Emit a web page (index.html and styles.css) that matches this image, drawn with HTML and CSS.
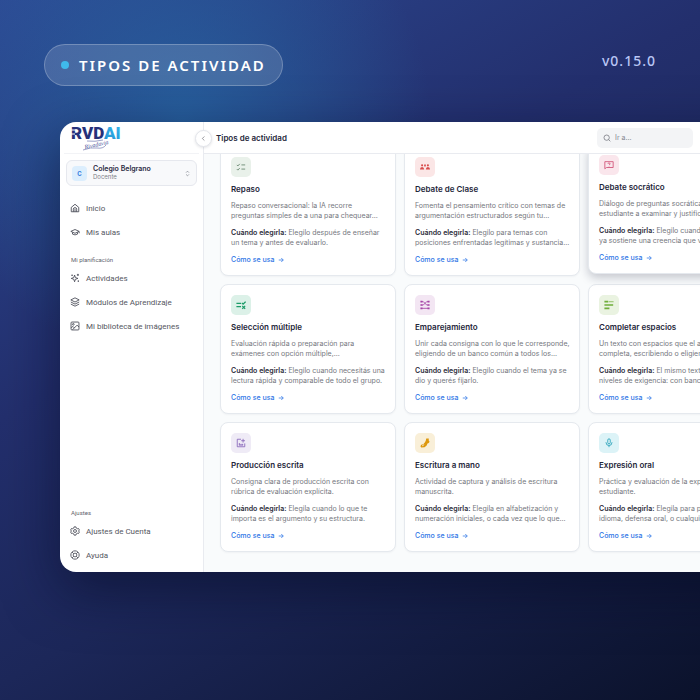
FILE: index.html
```html
<!DOCTYPE html>
<html lang="es">
<head>
    <meta charset="UTF-8">
    <meta name="viewport" content="width=device-width, initial-scale=1.0">
    <title>Tipos de actividad</title>
    <link rel="stylesheet" href="styles.css">
</head>
<body>
    <header class="hero">
        <h1 class="pill"><span class="pill-dot"></span>TIPOS DE ACTIVIDAD</h1>
        <span class="version">v0.15.0</span>
    </header>

    <div class="window">
        <aside class="sidebar">
            <div class="brand">
                <svg width="56" height="28" viewBox="0 0 56 28" role="img" aria-label="RVD AI">
                    <defs>
                        <linearGradient id="ai" x1="0" y1="1" x2="1" y2="0">
                            <stop offset="0" stop-color="#1b7fc4"/>
                            <stop offset="1" stop-color="#35b8ee"/>
                        </linearGradient>
                    </defs>
                    <text class="logo-text" x="0" y="14" fill="#26317a">RVD<tspan fill="url(#ai)">AI</tspan></text>
                    <path d="M0 5h6M0 9h4" stroke="#fff" stroke-width="1"/>
                    <text class="logo-script" x="14" y="24" transform="rotate(-12 14 24)">Rivadavia</text>
                    <path d="M12 25q8-3 14-2t9-3M16 16q8 1 16-1" fill="none" stroke="#5a63a3" stroke-width=".6"/>
                </svg>
            </div>

            <button class="school" type="button">
                <span class="school-avatar">C</span>
                <span class="school-info">
                    <strong>Colegio Belgrano</strong>
                    <small>Docente</small>
                </span>
                <svg class="school-arrows" viewBox="0 0 24 24"><path d="m7 15 5 5 5-5M7 9l5-5 5 5"/></svg>
            </button>

            <nav class="menu">
                <a href="#"><svg viewBox="0 0 24 24"><path d="M3 10.500 12 3l9 7.500V21H3z"/><path d="M8 21v-6a4 4 0 0 1 8 0v6M12 14v7"/></svg>Inicio</a>
                <a href="#"><svg viewBox="0 0 24 24"><path d="M2 10.500 12 6l10 4.500L12 15zM6 13v4q6 4 12 0v-4M22 11v4"/></svg>Mis aulas</a>
            </nav>

            <h2 class="menu-label">Mi planificación</h2>
            <nav class="menu">
                <a href="#"><svg viewBox="0 0 24 24"><path d="M11 5l2 6 6 2-6 2-2 6-2-6-6-2 6-2zM19 2v5M16.500 4.500h5M5 4v3M3.500 5.500h3M20 18v3M18.500 19.500h3"/></svg>Actividades</a>
                <a href="#"><svg viewBox="0 0 24 24"><path d="m12 2 10 5-10 5L2 7zM2 12l10 5 10-5M2 17l10 5 10-5"/></svg>Módulos de Aprendizaje</a>
                <a href="#"><svg viewBox="0 0 24 24"><rect x="2.500" y="2.500" width="19" height="19" rx="2"/><circle cx="8" cy="8" r="2"/><path d="m6 21 11-11 4.500 4.500M3 16l4-3 4 4"/></svg>Mi biblioteca de imágenes</a>
            </nav>

            <h2 class="menu-label menu-label-bottom">Ajustes</h2>
            <nav class="menu">
                <a href="#"><svg viewBox="0 0 24 24"><path d="M10 2h4l1 3 2.500 1.500 3-.5 2 3.500-2 2.500 2 2.500-2 3.500-3-.5L15 19l-1 3h-4l-1-3-2.500-1.500-3 .5-2-3.500 2-2.500-2-2.500 2-3.500 3 .5L9 5z"/><circle cx="12" cy="12" r="3.500"/></svg>Ajustes de Cuenta</a>
                <a href="#"><svg viewBox="0 0 24 24"><circle cx="12" cy="12" r="10"/><rect x="8" y="8" width="8" height="8" rx="2"/><path d="m5 5 3.500 3.500M19 5l-3.500 3.500M5 19l3.500-3.500M19 19l-3.500-3.500"/></svg>Ayuda</a>
            </nav>
        </aside>

        <main class="main">
            <div class="topbar">
                <button class="collapse" type="button" aria-label="Contraer menú"><svg viewBox="0 0 24 24"><path d="m15 5-7 7 7 7"/></svg></button>
                <h2>Tipos de actividad</h2>
                <label class="search">
                    <svg viewBox="0 0 24 24"><circle cx="11" cy="11" r="8"/><path d="m17 17 5 5"/></svg>
                    <input type="text" placeholder="Ir a..." aria-label="Ir a">
                </label>
            </div>

            <div class="content">
                <div class="grid">
                    <article class="card">
                        <span class="icon sage"><svg viewBox="0 0 24 24"><path d="m2 7 2.500 2.500L9 4.500M2 17l2.500 2.500L9 14.500M13 7h9M13 17h9"/></svg></span>
                        <h3>Repaso</h3>
                        <p>Repaso conversacional: la IA recorre<br>preguntas simples de a una para chequear...</p>
                        <p><strong>Cuándo elegirla:</strong> Elegilo después de enseñar<br>un tema y antes de evaluarlo.</p>
                        <a href="#">Cómo se usa <svg viewBox="0 0 24 24"><path d="M3 12h18M13 4l8 8-8 8"/></svg></a>
                    </article>

                    <article class="card">
                        <span class="icon red"><svg viewBox="0 0 24 24"><g fill="currentColor" stroke="none"><circle cx="5" cy="8" r="2.500"/><path d="M0 18q0-6 5-6t5 6z"/><circle cx="19" cy="8" r="2.500"/><path d="M14 18q0-6 5-6t5 6z"/><path d="M10 6h4v4h-1l-1 2-1-2h-1z"/></g></svg></span>
                        <h3>Debate de Clase</h3>
                        <p>Fomenta el pensamiento crítico con temas de<br>argumentación estructurados según tu...</p>
                        <p><strong>Cuándo elegirla:</strong> Elegilo para temas con<br>posiciones enfrentadas legítimas y sustancia...</p>
                        <a href="#">Cómo se usa <svg viewBox="0 0 24 24"><path d="M3 12h18M13 4l8 8-8 8"/></svg></a>
                    </article>

                    <article class="card card-active">
                        <span class="icon rose"><svg viewBox="0 0 24 24"><path d="M2 21V4h20v14H6z"/><path d="M9.500 9q0-2 2.500-2t2.500 2-2.500 3M12 14.500v1"/></svg></span>
                        <h3>Debate socrático</h3>
                        <p>Diálogo de preguntas socráticas que lleva al<br>estudiante a examinar y justificar sus ideas.</p>
                        <p><strong>Cuándo elegirla:</strong> Elegilo cuando el curso<br>ya sostiene una creencia que vale examinar.</p>
                        <a href="#">Cómo se usa <svg viewBox="0 0 24 24"><path d="M3 12h18M13 4l8 8-8 8"/></svg></a>
                    </article>

                    <article class="card">
                        <span class="icon green"><svg viewBox="0 0 24 24"><path d="M1 8h11M1 16h11M14 7l3 3 6-6M15 14l7 7M22 14l-7 7" stroke-width="3"/></svg></span>
                        <h3>Selección múltiple</h3>
                        <p>Evaluación rápida o preparación para<br>exámenes con opción múltiple,...</p>
                        <p><strong>Cuándo elegirla:</strong> Elegilo cuando necesitás una<br>lectura rápida y comparable de todo el grupo.</p>
                        <a href="#">Cómo se usa <svg viewBox="0 0 24 24"><path d="M3 12h18M13 4l8 8-8 8"/></svg></a>
                    </article>

                    <article class="card">
                        <span class="icon purple"><svg viewBox="0 0 24 24"><path d="M4 4h4l8 8h4M4 12h4l8-8h4M4 20h16"/><path d="M1 4h5M18 4h5M1 12h5M18 12h5M1 20h5M18 20h5" stroke-width="4"/></svg></span>
                        <h3>Emparejamiento</h3>
                        <p>Unir cada consigna con lo que le corresponde,<br>eligiendo de un banco común a todos los...</p>
                        <p><strong>Cuándo elegirla:</strong> Elegilo cuando el tema ya se<br>dio y querés fijarlo.</p>
                        <a href="#">Cómo se usa <svg viewBox="0 0 24 24"><path d="M3 12h18M13 4l8 8-8 8"/></svg></a>
                    </article>

                    <article class="card">
                        <span class="icon lime"><svg viewBox="0 0 24 24"><path d="M1 12h21M1 20h12M1 4h9" stroke-width="4"/><path d="M11 4h12" stroke-width="3" opacity=".6"/></svg></span>
                        <h3>Completar espacios</h3>
                        <p>Un texto con espacios que el alumno<br>completa, escribiendo o eligiendo.</p>
                        <p><strong>Cuándo elegirla:</strong> El mismo texto sirve a<br>niveles de exigencia: con banco o sin él.</p>
                        <a href="#">Cómo se usa <svg viewBox="0 0 24 24"><path d="M3 12h18M13 4l8 8-8 8"/></svg></a>
                    </article>

                    <article class="card">
                        <span class="icon violet"><svg viewBox="0 0 24 24"><path d="M12 3H3v18h18v-8M8 17v-5M12 17v-3M16 17v-3M7 17h10M17 2v9M12.500 6.500h9"/></svg></span>
                        <h3>Producción escrita</h3>
                        <p>Consigna clara de producción escrita con<br>rúbrica de evaluación explícita.</p>
                        <p><strong>Cuándo elegirla:</strong> Elegila cuando lo que te<br>importa es el argumento y su estructura.</p>
                        <a href="#">Cómo se usa <svg viewBox="0 0 24 24"><path d="M3 12h18M13 4l8 8-8 8"/></svg></a>
                    </article>

                    <article class="card">
                        <span class="icon amber"><svg viewBox="0 0 24 24"><path fill="currentColor" stroke="none" d="M15 1h6v5l2 3-2 3-3 1-2 5-5 4-8 1-2-3 2-4 5-1 4-5 2-4z"/><path d="M5 19l5-3" stroke="#f9efd8"/></svg></span>
                        <h3>Escritura a mano</h3>
                        <p>Actividad de captura y análisis de escritura<br>manuscrita.</p>
                        <p><strong>Cuándo elegirla:</strong> Elegila en alfabetización y<br>numeración iniciales, o cada vez que lo que...</p>
                        <a href="#">Cómo se usa <svg viewBox="0 0 24 24"><path d="M3 12h18M13 4l8 8-8 8"/></svg></a>
                    </article>

                    <article class="card">
                        <span class="icon cyan"><svg viewBox="0 0 24 24"><rect x="9" y="2" width="6" height="12" rx="3"/><path d="M5 10v1a7 7 0 0 0 14 0v-1M12 18v4"/></svg></span>
                        <h3>Expresión oral</h3>
                        <p>Práctica y evaluación de la expresión del<br>estudiante.</p>
                        <p><strong>Cuándo elegirla:</strong> Elegila para practicar<br>idioma, defensa oral, o cualquier exposición.</p>
                        <a href="#">Cómo se usa <svg viewBox="0 0 24 24"><path d="M3 12h18M13 4l8 8-8 8"/></svg></a>
                    </article>
                </div>
            </div>
        </main>
    </div>
</body>
</html>
```
FILE: styles.css
```css
* {
    box-sizing: border-box;
}

body {
    min-height: 100vh;
    margin: 0;
    overflow: hidden;
    font-family: Inter, "Liberation Sans", sans-serif;
    background:
        radial-gradient(circle at 26% 17%, rgba(38, 105, 165, 0.75), rgba(38, 105, 165, 0) 32%),
        linear-gradient(150deg, #2d4a94 0%, #232f6d 38%, #1c2759 62%, #0b122b 100%);
}

h1, h2, h3, p {
    margin: 0;
}

a {
    text-decoration: none;
}

button, input {
    font-family: inherit;
}

svg {
    flex: none;
    fill: none;
    stroke: currentColor;
    stroke-width: 2;
}

.hero {
    display: flex;
    justify-content: space-between;
    padding: 44px 44px 36px;
    font-family: "Noto Sans", "Open Sans", sans-serif;
}

.pill {
    display: flex;
    align-items: center;
    gap: 10px;
    height: 42px;
    padding: 0 16px;
    border: 1px solid rgba(255, 255, 255, 0.24);
    border-radius: 21px;
    background: rgba(255, 255, 255, 0.14);
    color: #fff;
    font-size: 15px;
    font-weight: 600;
    letter-spacing: 2px;
}

.pill-dot {
    width: 8px;
    height: 8px;
    border-radius: 50%;
    background: #3fb9ec;
}

.version {
    padding-top: 8px;
    color: #b9c6f5;
    font-size: 14px;
    line-height: 18px;
    font-weight: 500;
    letter-spacing: 1px;
}

/* the window runs off the right edge */
.window {
    display: flex;
    margin: 0 -80px 0 60px;
    border-radius: 16px;
    overflow: hidden;
    background: #fff;
    box-shadow: 0 18px 54px rgba(5, 10, 35, 0.55);
}

.sidebar {
    display: flex;
    flex-direction: column;
    flex: none;
    width: 144px;
    padding-bottom: 5px;
    border-right: 1px solid #e9ebf0;
}

.brand {
    height: 32px;
    margin: 0 4px;
    padding: 3px 7px 0;
    border-bottom: 1px solid #f2f3f6;
}

.brand svg {
    display: block;
    stroke: none;
}

.logo-text {
    font-family: Roboto, Inter, sans-serif;
    font-size: 17px;
    font-weight: 900;
}

.logo-script {
    fill: #4b559c;
    font-family: "Liberation Serif", serif;
    font-size: 6px;
    font-style: italic;
}

.school {
    display: flex;
    align-items: center;
    gap: 6px;
    height: 26px;
    margin: 6px 6px 10px;
    padding: 0 5px;
    border: 1px solid #e6e8ee;
    border-radius: 6px;
    background: #f8f9fb;
    text-align: left;
}

.school-avatar {
    width: 15px;
    height: 15px;
    border-radius: 4px;
    background: #dceefd;
    color: #2f7be0;
    font-size: 6px;
    line-height: 15px;
    font-weight: 700;
    text-align: center;
}

.school-info {
    flex: 1;
}

.school-info strong,
.school-info small {
    display: block;
    line-height: 8px;
}

.school-info strong {
    color: #2b2c44;
    font-size: 7px;
    font-weight: 600;
}

.school-info small {
    color: #7c7f8a;
    font-size: 6px;
}

.school-arrows {
    width: 7px;
    height: 7px;
    color: #6b6e7a;
}

.menu a {
    display: flex;
    align-items: center;
    gap: 6px;
    height: 24px;
    padding-left: 10px;
    color: #55575f;
    font-family: Roboto, Inter, sans-serif;
    font-size: 8px;
}

.menu svg {
    width: 10px;
    height: 10px;
    color: #41434f;
}

.menu-label {
    margin-top: 10px;
    padding-left: 11px;
    color: #62646e;
    font-family: Roboto, Inter, sans-serif;
    font-size: 6px;
    line-height: 12px;
    font-weight: 400;
}

.menu-label-bottom {
    margin-top: auto;
}

.main {
    flex: 1;
    min-width: 0;
    background: #f9fbfc;
}

.topbar {
    position: relative;
    z-index: 2;
    display: flex;
    align-items: center;
    height: 32px;
    padding: 0 87px 0 12px;
    border-bottom: 1px solid #e9ebf0;
    background: #fff;
}

.topbar h2 {
    color: #24263a;
    font-size: 8px;
    font-weight: 600;
}

/* sits over the border between sidebar and topbar */
.collapse {
    position: absolute;
    top: 8px;
    left: -9px;
    display: grid;
    place-items: center;
    width: 17px;
    height: 17px;
    padding: 0;
    border: 1px solid #e3e5ea;
    border-radius: 50%;
    background: #fff;
    color: #55575f;
    box-shadow: 0 1px 3px rgba(20, 25, 50, 0.12);
}

.collapse svg {
    width: 7px;
    height: 7px;
}

.search {
    display: flex;
    align-items: center;
    gap: 4px;
    width: 96px;
    height: 20px;
    margin-left: auto;
    padding: 0 6px;
    border-radius: 5px;
    background: #f3f4f6;
    color: #62646e;
}

.search svg {
    width: 8px;
    height: 8px;
}

.search input {
    width: 100%;
    padding: 0;
    border: 0;
    outline: 0;
    background: none;
    font-size: 7px;
}

.search input::placeholder {
    color: #858892;
}

/* list is scrolled a little under the topbar */
.content {
    padding: 0 16px 20px;
}

.grid {
    display: grid;
    grid-template-columns: repeat(3, minmax(0, 1fr));
    gap: 8px;
    margin-top: -8px;
}

.card {
    display: flex;
    flex-direction: column;
    align-items: flex-start;
    padding: 10px;
    border: 1px solid #e5e9ee;
    border-radius: 8px;
    background: #fff;
    box-shadow: 0 1px 2px rgba(20, 25, 50, 0.04);
}

.card-active {
    position: relative;
    top: -2px;
    box-shadow: 0 4px 10px rgba(20, 25, 50, 0.22);
}

.card h3 {
    margin: 6px 0;
    color: #24263a;
    font-size: 8px;
    line-height: 12px;
    font-weight: 600;
}

.card p {
    margin-bottom: 7px;
    color: #75777e;
    font-size: 7px;
    line-height: 10px;
    white-space: nowrap;
}

.card p strong {
    color: #2b2c3a;
    font-weight: 600;
}

.card a {
    display: flex;
    align-items: center;
    gap: 4px;
    color: #2f76e6;
    font-size: 7px;
    line-height: 10px;
    font-weight: 500;
}

.card a svg {
    width: 6px;
    height: 6px;
    stroke-width: 3;
}

.icon {
    display: grid;
    place-items: center;
    width: 20px;
    height: 20px;
    border-radius: 5px;
}

.icon svg {
    width: 10px;
    height: 10px;
    stroke-width: 2;
}

.sage {
    background: #e9f1ea;
    color: #5f8068;
}

.red {
    background: #fbe6e6;
    color: #d84a4a;
}

.rose {
    background: #fae6ec;
    color: #cf4d74;
}

.green {
    background: #dcf1e8;
    color: #1c9c68;
}

.purple {
    background: #f3e6f3;
    color: #a544a6;
}

.lime {
    background: #eaf3e1;
    color: #6fae3a;
}

.violet {
    background: #efebf6;
    color: #8563b8;
}

.amber {
    background: #f9efd8;
    color: #dd980f;
}

.cyan {
    background: #dcf3f7;
    color: #24a0b8;
}
```
